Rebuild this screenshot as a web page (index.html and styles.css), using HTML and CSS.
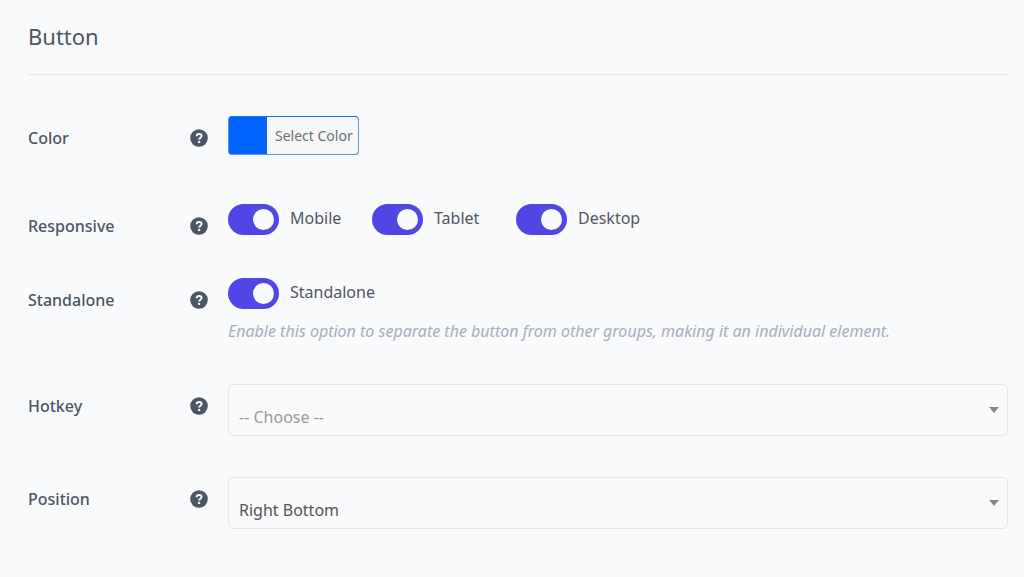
FILE: index.html
```html
<!DOCTYPE html>
<html lang="en">
<head>
<meta charset="utf-8">
<meta name="viewport" content="width=device-width, initial-scale=1">
<title>Button</title>
<link rel="stylesheet" href="styles.css">
</head>
<body>
<svg class="sprite" aria-hidden="true">
  <symbol id="help" viewBox="0 0 18 18">
    <circle cx="9" cy="9" r="8.800"/>
    <path class="mark" d="M6.600 7.200C6.600 5.700 7.600 4.900 9.100 4.900s2.500.8 2.500 2.100c0 1.800-2.500 1.700-2.500 3.500"/>
    <circle class="dot" cx="9.100" cy="12.900" r="1.200"/>
  </symbol>
  <symbol id="caret" viewBox="0 0 10 6"><path d="M0 0h10L5 6z"/></symbol>
</svg>
<form class="settings">
  <h1 class="title">Button</h1>

  <div class="row">
    <span class="label" id="color-label">Color</span>
    <svg class="help" role="img" aria-label="Help"><use href="#help"/></svg>
    <div class="field field-color" role="group" aria-labelledby="color-label">
      <button class="color-button" type="button"><span class="color-text">Select Color</span></button>
    </div>
  </div>

  <div class="row">
    <span class="label" id="responsive-label">Responsive</span>
    <svg class="help" role="img" aria-label="Help"><use href="#help"/></svg>
    <div class="field switches" role="group" aria-labelledby="responsive-label">
      <label class="switch"><input class="toggle" type="checkbox" checked><span class="switch-text">Mobile</span></label>
      <label class="switch"><input class="toggle" type="checkbox" checked><span class="switch-text">Tablet</span></label>
      <label class="switch"><input class="toggle" type="checkbox" checked><span class="switch-text">Desktop</span></label>
    </div>
  </div>

  <div class="row">
    <span class="label">Standalone</span>
    <svg class="help" role="img" aria-label="Help"><use href="#help"/></svg>
    <div class="field">
      <label class="switch"><input class="toggle" type="checkbox" checked><span class="switch-text">Standalone</span></label>
      <p class="hint">Enable this option to separate the button from other groups, making it an individual element.</p>
    </div>
  </div>

  <div class="row">
    <label class="label" for="hotkey">Hotkey</label>
    <svg class="help" role="img" aria-label="Help"><use href="#help"/></svg>
    <div class="field select-box">
      <select class="select placeholder" id="hotkey"><option>-- Choose --</option></select>
      <svg class="caret" aria-hidden="true"><use href="#caret"/></svg>
    </div>
  </div>

  <div class="row">
    <label class="label" for="position">Position</label>
    <svg class="help" role="img" aria-label="Help"><use href="#help"/></svg>
    <div class="field select-box">
      <select class="select" id="position"><option>Right Bottom</option></select>
      <svg class="caret" aria-hidden="true"><use href="#caret"/></svg>
    </div>
  </div>
</form>
</body>
</html>
```
FILE: styles.css
```css
* {
  box-sizing: border-box;
}

body {
  margin: 0;
  background: #f9fafc;
  color: #50575e;
  font: 16px/24px "Segoe UI", "Noto Sans", sans-serif;
}

.sprite {
  display: none;
}

.settings {
  display: flex;
  flex-direction: column;
  gap: 41px;
  padding: 20px 16px 48px 28px;
}

.title {
  margin: 0;
  padding-bottom: 22px;
  border-bottom: 1px solid #e5e7eb;
  font-size: 22px;
  font-weight: 400;
  line-height: 32px;
}

.row {
  display: grid;
  grid-template-columns: 162px 18px minmax(0, 1fr);
  align-items: start;
}

.label {
  padding-top: 11px;
  color: #4b5563;
  font-weight: 500;
  line-height: 22px;
}

.help {
  width: 18px;
  height: 18px;
  margin-top: 13px;
  fill: #4b5563;
}

.mark {
  fill: none;
  stroke: #f9fafc;
  stroke-width: 2;
}

.dot {
  fill: #f9fafc;
}

.field {
  margin-left: 20px;
}

.field-color {
  padding-bottom: 8px;
}

.color-button {
  display: flex;
  height: 39px;
  padding: 0 0 0 38px;
  overflow: hidden;
  border: 1px solid #5b9bd0;
  border-top-color: #1a6fd8;
  border-radius: 4px;
  background: #0062ff;
  font: inherit;
}

.color-text {
  padding: 0 5px 0 8px;
  background: #f6f7f7;
  color: #6b6f75;
  font-size: 14px;
  line-height: 38px;
}

.switches {
  display: grid;
  grid-template-columns: 144px 144px auto;
  justify-content: start;
}

.switch {
  display: flex;
  align-items: center;
  gap: 11px;
}

.switch-text {
  padding-bottom: 3px;
}

.toggle {
  appearance: none;
  display: flex;
  justify-content: flex-end;
  flex: none;
  width: 51px;
  height: 31px;
  margin: 0;
  padding: 5px;
  border-radius: 16px;
  background: #4f46e5;
}

.toggle::before {
  content: "";
  width: 21px;
  height: 21px;
  border-radius: 50%;
  background: #f9fafc;
}

.toggle:not(:checked) {
  justify-content: flex-start;
  background: #9ca3af;
}

.hint {
  margin: 10px 0 0;
  color: #a7aebb;
  font-style: italic;
}

.select-box {
  display: grid;
  align-items: center;
}

.select,
.caret {
  grid-area: 1 / 1;
}

.select {
  appearance: none;
  width: 100%;
  height: 52px;
  padding: 14px 32px 0 10px;
  border: 1px solid #e5e7eb;
  border-radius: 5px;
  background: transparent;
  color: #555;
  font: inherit;
}

.placeholder {
  color: #999;
}

.caret {
  justify-self: end;
  width: 10px;
  height: 6px;
  margin-right: 9px;
  fill: #888;
  pointer-events: none;
}
```
